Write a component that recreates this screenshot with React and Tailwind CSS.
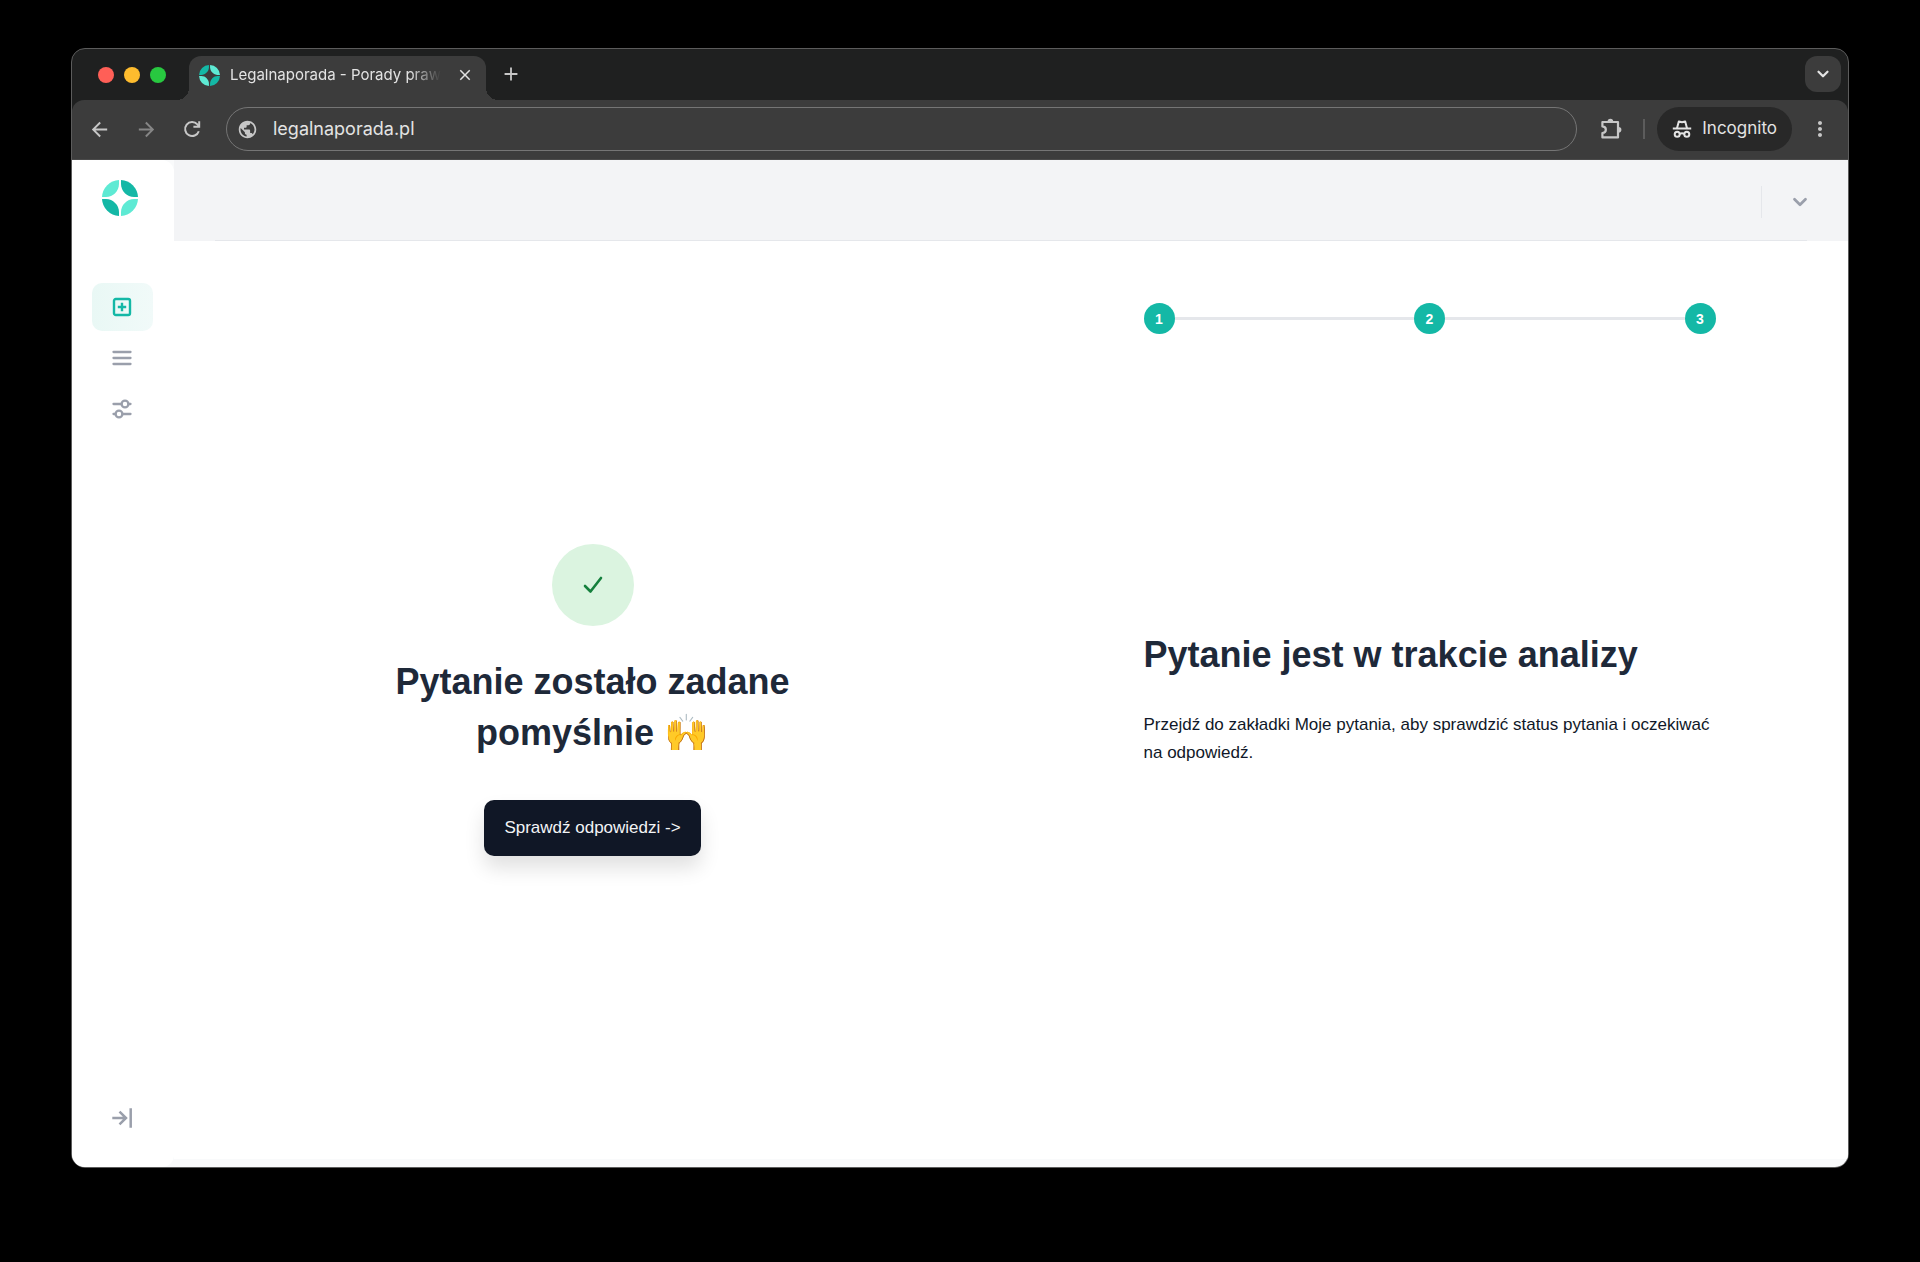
import { MdArrowBack, MdArrowForward, MdPublic, MdMoreVert, MdClose, MdAdd } from "react-icons/md";
import { ChevronDown } from "lucide-react";

const pasos = [1, 2, 3];

function Logo({ size, className }) {
  return (
    <svg width={size} height={size} viewBox="0 0 36 36" className={className} aria-hidden="true">
      <path d="M17 0 A18 18 0 0 0 0 17 H4 C11 17 17 11 17 4 Z" fill="#5eead4" />
      <path d="M19 0 A18 18 0 0 1 36 17 H32 C25 17 19 11 19 4 Z" fill="#14b8a6" />
      <path d="M17 36 A18 18 0 0 1 0 19 H4 C11 19 17 25 17 32 Z" fill="#14b8a6" />
      <path d="M19 36 A18 18 0 0 0 36 19 H32 C25 19 19 25 19 32 Z" fill="#5eead4" />
    </svg>
  );
}

function ReloadIcon() {
  return (
    <svg width="20" height="20" viewBox="0 0 20 20" fill="none" stroke="currentColor" strokeWidth="2" aria-hidden="true">
      <path d="M16.8 12.2 A7 7 0 1 1 15.4 5.4 L17 7.4" />
      <path d="M17.2 2.2 V7.8 H11.4" />
    </svg>
  );
}

function ExtensionIcon() {
  return (
    <svg width="24" height="24" viewBox="0 0 24 24" aria-hidden="true">
      <path
        d="M3.4 5 H19 V20.4 H3.4 V16 C8 15.6 8 9.8 3.4 9.4 Z"
        fill="none" stroke="currentColor" strokeWidth="2.2" strokeLinejoin="round"
      />
      <path d="M8.6 4.6 A2.8 2.8 0 0 1 14.2 4.6 Z M19.6 10 A2.8 2.8 0 0 1 19.6 15.6 Z" fill="currentColor" />
    </svg>
  );
}

function IncognitoIcon() {
  return (
    <svg width="20" height="20" viewBox="0 0 20 20" fill="none" stroke="currentColor" strokeWidth="2" aria-hidden="true">
      <path d="M0.8 9.6 H19.2" />
      <path d="M5 9.2 L6.8 2.4 L10 3.3 L13.2 2.4 L15 9.2" strokeLinejoin="round" />
      <circle cx="5.2" cy="15.2" r="2.5" />
      <circle cx="14.8" cy="15.2" r="2.5" />
      <path d="M7.7 14.8 Q10 13.6 12.3 14.8" />
    </svg>
  );
}

function AddSquareIcon() {
  return (
    <svg width="20" height="20" viewBox="0 0 20 20" fill="none" stroke="currentColor" strokeWidth="2.4" aria-hidden="true">
      <rect x="2" y="2" width="16" height="16" rx="1.8" />
      <path d="M10 5.8 V14.2 M5.8 10 H14.2" />
    </svg>
  );
}

function ListIcon() {
  return (
    <svg width="20" height="20" viewBox="0 0 20 20" stroke="currentColor" strokeWidth="2.3" strokeLinecap="round" aria-hidden="true">
      <path d="M1.5 4 H18.5 M1.5 10 H18.5 M1.5 16 H18.5" />
    </svg>
  );
}

function SettingsIcon() {
  return (
    <svg width="20" height="20" viewBox="0 0 20 20" fill="none" stroke="currentColor" strokeWidth="2.3" strokeLinecap="round" aria-hidden="true">
      <path d="M1.5 5 H9.5 M16.5 5 H18.5 M1.5 15 H3.5 M10.5 15 H18.5" />
      <circle cx="13" cy="5" r="3.4" />
      <circle cx="7" cy="15" r="3.4" />
    </svg>
  );
}

function ExpandIcon() {
  return (
    <svg width="20" height="20" viewBox="0 0 20 20" fill="none" stroke="currentColor" strokeWidth="2.5" aria-hidden="true">
      <path d="M0.3 10 H14 M7.5 3.6 L14 10 L7.5 16.4" />
      <path d="M18.7 0.3 V19.7" />
    </svg>
  );
}

function BarraPestanas() {
  return (
    <div className="flex h-[51px] items-end justify-between pl-[26px] pr-[7px]">
      <div className="flex items-end">
        <div className="flex items-center gap-[10px] pb-[17px]">
          <button aria-label="Zamknij okno" className="size-4 rounded-full bg-[#ff5f57]" />
          <button aria-label="Minimalizuj" className="size-4 rounded-full bg-[#febc2e]" />
          <button aria-label="Maksymalizuj" className="size-4 rounded-full bg-[#28c840]" />
        </div>
        <div className="ml-[11px] size-3 bg-[radial-gradient(circle_at_0_0,transparent_12px,#3c3c3c_12px)]" />
        <div className="flex h-11 w-[297px] items-center rounded-t-xl bg-[#3c3c3c] pb-[6px] pl-[10px] pr-3">
          <Logo size={21} className="shrink-0 -scale-x-100" />
          <span className="ml-[10px] whitespace-nowrap text-[15px] text-[#e3e3e3] mask-r-from-85%">
            Legalnaporada - Porady praw
          </span>
          <button aria-label="Zamknij kartę" className="ml-auto text-[#e3e3e3]">
            <MdClose size={18} />
          </button>
        </div>
        <div className="size-3 bg-[radial-gradient(circle_at_100%_0,transparent_12px,#3c3c3c_12px)]" />
        <button aria-label="Nowa karta" className="mb-[15px] ml-[2px] text-[#c7c7c7]">
          <MdAdd size={22} />
        </button>
      </div>
      <button aria-label="Szukaj kart" className="mb-2 flex size-9 items-center justify-center rounded-xl bg-[#3c3c3c] text-[#e3e3e3]">
        <ChevronDown size={18} strokeWidth={3} />
      </button>
    </div>
  );
}

function BarraNavegacion() {
  return (
    <div className="flex h-[60px] items-center rounded-t-xl border-b border-[#4a4a4a] bg-[#3c3c3c] px-4 pb-px text-[#c7c7c7]">
      <div className="flex items-center gap-6">
        <button aria-label="Wstecz"><MdArrowBack size={23} /></button>
        <button aria-label="Dalej" className="text-[#868686]"><MdArrowForward size={23} /></button>
        <button aria-label="Odśwież"><ReloadIcon /></button>
      </div>
      <label className="ml-6 flex h-11 flex-1 items-center gap-[15px] rounded-full border border-[#757575] pl-[10px]">
        <MdPublic size={21} />
        <input
          aria-label="Adres strony"
          defaultValue="legalnaporada.pl"
          className="flex-1 bg-transparent text-lg text-[#e3e3e3] outline-none"
        />
      </label>
      <button aria-label="Rozszerzenia" className="ml-[22px]"><ExtensionIcon /></button>
      <div className="ml-5 h-5 w-[2px] bg-[#5c5c5c]" />
      <button className="ml-3 flex h-11 items-center gap-[10px] rounded-full bg-[#282828] px-[15px] text-[17px] text-[#e3e3e3]">
        <IncognitoIcon />
        Incognito
      </button>
      <button aria-label="Menu" className="ml-4"><MdMoreVert size={24} /></button>
    </div>
  );
}

function Sidebar() {
  return (
    <aside className="flex w-[102px] shrink-0 flex-col items-center rounded-r-xl bg-white pb-[39px] pr-[2px] pt-5 text-[#9a9fab]">
      <a href="#" aria-label="Legalnaporada" className="mr-1"><Logo size={36} /></a>
      <nav className="mt-[67px] flex flex-col gap-[3px]">
        <a href="#" aria-label="Zadaj pytanie" className="flex h-12 w-[61px] items-center justify-center rounded-[10px] bg-linear-to-r from-[#e9f8f5] to-[#f1faf9] text-[#14b8a6]">
          <AddSquareIcon />
        </a>
        <a href="#" aria-label="Moje pytania" className="flex h-12 w-[61px] items-center justify-center"><ListIcon /></a>
        <a href="#" aria-label="Ustawienia" className="flex h-12 w-[61px] items-center justify-center"><SettingsIcon /></a>
      </nav>
      <button aria-label="Rozwiń menu" className="mt-auto"><ExpandIcon /></button>
    </aside>
  );
}

function Pasos() {
  return (
    <ol className="flex items-center">
      {pasos.map((paso, i) => (
        <li key={paso} className={i === 0 ? "flex items-center" : "flex flex-1 items-center"}>
          {i > 0 && <span className="h-[3px] flex-1 bg-gray-200" />}
          <span className="flex size-[31px] items-center justify-center rounded-full bg-[#14b8a6] text-sm font-bold text-white">
            {paso}
          </span>
        </li>
      ))}
    </ol>
  );
}

export default function App() {
  return (
    <div className="flex min-h-screen flex-col bg-black px-[71px] pb-[94px] pt-12">
      <div className="flex flex-1 flex-col overflow-hidden rounded-[14px] border border-[#5c5c5c] bg-[#1f2020]">
        <div className="font-[Inter,sans-serif]">
          <BarraPestanas />
          <BarraNavegacion />
        </div>

        <div className="flex flex-1 bg-gray-50 font-['Liberation_Sans',Arial,sans-serif]">
          <Sidebar />
          <div className="flex flex-1 flex-col pb-2">
            <header className="flex h-[81px] flex-col bg-gray-100">
              <div className="flex flex-1 items-center justify-end pr-[37px] pt-1">
                <div className="h-8 w-px bg-gray-200" />
                <button aria-label="Konto" className="ml-[27px] text-[#9a9fab]">
                  <ChevronDown size={22} strokeWidth={3} />
                </button>
              </div>
              <hr className="mx-[41px] border-gray-200" />
            </header>

            <main className="grid flex-1 grid-cols-2 bg-white">
              <section className="flex flex-col items-center justify-center">
                <div className="flex size-[82px] items-center justify-center rounded-full bg-[#dbf4e0]">
                  <svg width="20" height="18" viewBox="0 0 20 18" fill="none" stroke="#15803d" strokeWidth="2.6" strokeLinecap="round" strokeLinejoin="round" aria-hidden="true">
                    <path d="M2 10 L7.5 15.5 L18 2" />
                  </svg>
                </div>
                <h1 className="mt-[30px] max-w-[440px] text-center text-4xl leading-[51px] font-bold text-gray-800">
                  Pytanie zostało zadane pomyślnie 🙌
                </h1>
                <button className="mt-[42px] h-14 rounded-[10px] bg-[#101726] px-5 text-[17px] text-gray-100 shadow-[0_12px_20px_rgba(0,0,0,0.12)]">
                  Sprawdź odpowiedzi -&gt;
                </button>
              </section>

              <section className="flex flex-col items-center pt-[62px]">
                <div className="flex w-full max-w-[572px] flex-1 flex-col">
                  <Pasos />
                  <div className="flex flex-1 flex-col justify-center pb-[98px]">
                    <h2 className="text-4xl leading-[51px] font-bold text-gray-800">Pytanie jest w trakcie analizy</h2>
                    <p className="mt-[31px] text-[17px] leading-7 text-gray-900">
                      Przejdź do zakładki Moje pytania, aby sprawdzić status pytania i oczekiwać na odpowiedź.
                    </p>
                  </div>
                </div>
              </section>
            </main>
          </div>
        </div>
      </div>
    </div>
  );
}
